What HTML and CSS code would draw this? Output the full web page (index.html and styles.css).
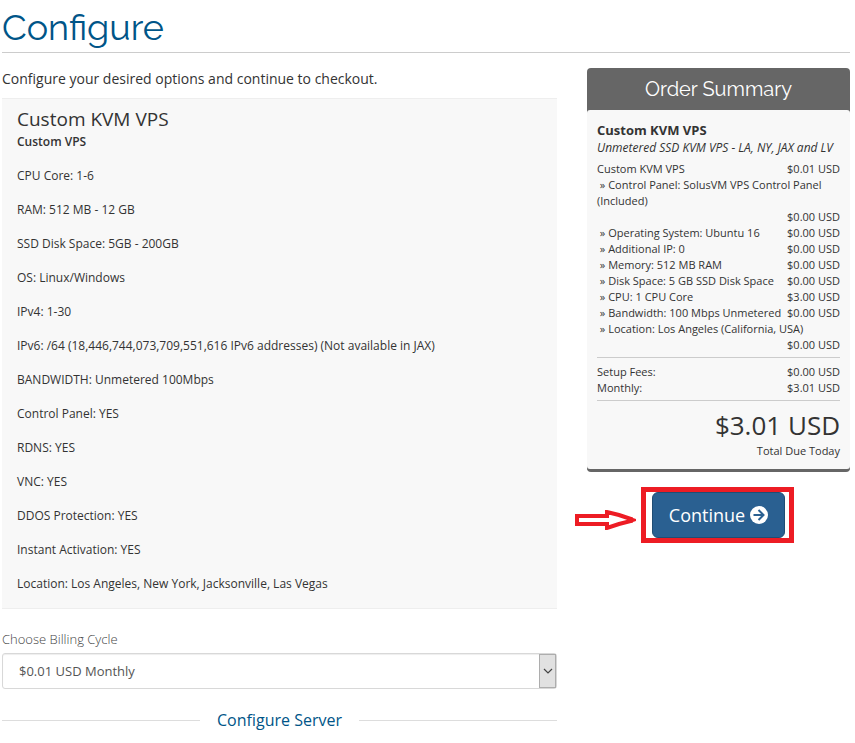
FILE: index.html
```html
<!DOCTYPE html>
<html lang="en">
<head>
<meta charset="utf-8">
<meta name="viewport" content="width=device-width, initial-scale=1">
<title>Configure</title>
<link rel="stylesheet" href="styles.css">
</head>
<body>
<div class="page">
  <h1 class="page-title">Configure</h1>
  <div class="columns">
    <main class="main">
      <p class="intro">Configure your desired options and continue to checkout.</p>
      <section class="product">
        <h2 class="product-name">Custom KVM VPS</h2>
        <p class="spec"><strong>Custom VPS</strong></p>
        <p class="spec">CPU Core: 1-6</p>
        <p class="spec">RAM: 512 MB - 12 GB</p>
        <p class="spec">SSD Disk Space: 5GB - 200GB</p>
        <p class="spec">OS: Linux/Windows</p>
        <p class="spec">IPv4: 1-30</p>
        <p class="spec">IPv6: /64 (18,446,744,073,709,551,616 IPv6 addresses) (Not available in JAX)</p>
        <p class="spec">BANDWIDTH: Unmetered 100Mbps</p>
        <p class="spec">Control Panel: YES</p>
        <p class="spec">RDNS: YES</p>
        <p class="spec">VNC: YES</p>
        <p class="spec">DDOS Protection: YES</p>
        <p class="spec">Instant Activation: YES</p>
        <p class="spec">Location: Los Angeles, New York, Jacksonville, Las Vegas</p>
      </section>
      <label class="field-label" for="cycle">Choose Billing Cycle</label>
      <div class="select-box">
        <select class="select" id="cycle">
          <option>$0.01 USD Monthly</option>
        </select>
        <span class="select-arrow" aria-hidden="true">
          <svg width="10" height="6" viewBox="0 0 10 6"><path d="M1 1l4 4 4-4" fill="none" stroke="#444" stroke-width="1.2"/></svg>
        </span>
      </div>
      <h2 class="sub-heading"><span>Configure Server</span></h2>
    </main>
    <aside class="side">
      <section class="summary">
        <h2 class="summary-title">Order Summary</h2>
        <div class="summary-body">
          <h3 class="item-name">Custom KVM VPS</h3>
          <p class="item-group">Unmetered SSD KVM VPS - LA, NY, JAX and LV</p>
          <div class="row"><span>Custom KVM VPS</span><span class="price">$0.01 USD</span></div>
          <div class="row"><span>&nbsp;» Control Panel: SolusVM VPS Control Panel (Included)</span><span class="price">$0.00 USD</span></div>
          <div class="row"><span>&nbsp;» Operating System: Ubuntu 16</span><span class="price">$0.00 USD</span></div>
          <div class="row"><span>&nbsp;» Additional IP: 0</span><span class="price">$0.00 USD</span></div>
          <div class="row"><span>&nbsp;» Memory: 512 MB RAM</span><span class="price">$0.00 USD</span></div>
          <div class="row"><span>&nbsp;» Disk Space: 5 GB SSD Disk Space</span><span class="price">$0.00 USD</span></div>
          <div class="row"><span>&nbsp;» CPU: 1 CPU Core</span><span class="price">$3.00 USD</span></div>
          <div class="row"><span>&nbsp;» Bandwidth: 100 Mbps Unmetered</span><span class="price">$0.00 USD</span></div>
          <div class="row"><span>&nbsp;» Location: Los Angeles (California, USA)</span><span class="price">$0.00 USD</span></div>
          <div class="fees">
            <div class="row"><span>Setup Fees:</span><span class="price">$0.00 USD</span></div>
            <div class="row"><span>Monthly:</span><span class="price">$3.01 USD</span></div>
          </div>
          <div class="total">$3.01 USD</div>
          <div class="total-label">Total Due Today</div>
        </div>
      </section>
      <div class="action">
        <div class="highlight">
          <svg class="pointer" width="62" height="20" viewBox="0 0 62 20" aria-hidden="true"><path d="M2 6H32V2L44 5L56 9V11L44 14L32 18V14H2Z" fill="#fff" stroke="#ed1c24" stroke-width="4"/><path d="M55 7L61 9V11L55 13Z" fill="#ed1c24"/></svg>
          <button class="continue" type="button">Continue
            <svg width="18" height="18" viewBox="0 0 18 18" aria-hidden="true"><circle cx="9" cy="9" r="9" fill="#fff"/><path d="M3.500 9H13M8.500 4L13.500 9L8.500 14" fill="none" stroke="#2a6091" stroke-width="2"/></svg>
          </button>
        </div>
      </div>
    </aside>
  </div>
</div>
</body>
</html>
```
FILE: styles.css
```css
* {
  box-sizing: border-box;
}

body {
  margin: 0;
  background: #fff;
  color: #333;
  font-family: "Open Sans", sans-serif;
  font-size: 14px;
}

h1, h2, h3, p {
  margin: 0;
  font-weight: 400;
}

.page {
  padding: 5px 5px 0 2px;
}

.page-title {
  border-bottom: 1px solid #ccc;
  padding-bottom: 3px;
  color: #058;
  font-family: Raleway, Lato, sans-serif;
  font-size: 36px;
  line-height: 44px;
}

.columns {
  display: grid;
  grid-template-columns: minmax(0, 1fr) 263px;
  gap: 30px;
  align-items: start;
  padding-top: 15px;
}

.intro {
  line-height: 20px;
  margin: 1px 0 9px;
}

.product {
  margin-bottom: 20px;
  padding: 8px 15px 16px;
  border-top: 1px solid #eee;
  border-bottom: 1px solid #eee;
  background: #f8f8f8;
}

.product-name {
  padding-bottom: 2px;
  font-size: 19px;
  line-height: 24px;
}

.spec {
  font-size: 12px;
  line-height: 17px;
}

.spec + .spec {
  margin-top: 17px;
}

.spec strong {
  font-weight: 600;
}

.field-label {
  display: block;
  margin-bottom: 4px;
  color: #444;
  font-size: 13px;
  font-weight: 300;
  line-height: 20px;
}

.select-box {
  position: relative;
}

.select {
  appearance: none;
  display: block;
  width: 100%;
  height: 36px;
  padding: 0 32px 0 16px;
  border: 1px solid #d8d8d8;
  border-radius: 3px;
  background: #fff;
  box-shadow: inset 0 1px 1px rgba(0, 0, 0, 0.07);
  color: #555;
  font-family: inherit;
  font-size: 13px;
}

.select-arrow {
  position: absolute;
  top: 1px;
  right: 1px;
  bottom: 1px;
  display: flex;
  align-items: center;
  justify-content: center;
  width: 17px;
  border: 1px solid #adadad;
  background: #e1e1e1;
  pointer-events: none;
}

.sub-heading {
  display: flex;
  align-items: center;
  gap: 17px;
  margin-top: 20px;
  color: #058;
  font-size: 16px;
  line-height: 22px;
}

.sub-heading::before,
.sub-heading::after {
  content: "";
  flex: 1;
  height: 1px;
  background: #ddd;
}

.summary {
  border-bottom: 3px solid #666;
  border-radius: 4px;
  background: #666;
}

.summary-title {
  color: #fff;
  font-family: Raleway, Lato, sans-serif;
  font-size: 20px;
  line-height: 42px;
  text-align: center;
}

.summary-body {
  padding: 11px 10px 10px;
  border-radius: 3px;
  background: #f8f8f8;
}

.item-name {
  font-size: 13px;
  font-weight: 700;
  line-height: 18px;
}

.item-group {
  margin-bottom: 5px;
  font-size: 12px;
  font-style: italic;
  line-height: 17px;
}

.row {
  display: flex;
  flex-wrap: wrap;
  font-size: 11px;
  line-height: 16px;
}

.price {
  margin-left: auto;
}

.fees {
  margin: 4px 0 8px;
  padding: 6px 0 4px;
  border-top: 1px solid #ccc;
  border-bottom: 1px solid #ccc;
}

.total {
  padding-bottom: 2px;
  font-size: 26px;
  line-height: 32px;
  text-align: right;
}

.total-label {
  font-size: 11px;
  line-height: 16px;
  text-align: right;
}

.action {
  display: flex;
  justify-content: center;
  padding: 15px 2px 0 0;
}

.highlight {
  position: relative;
  padding: 0 4px 0 6px;
  border: 5px solid #ed1c24;
}

.pointer {
  position: absolute;
  top: 18px;
  right: 100%;
  margin-right: 9px;
}

.continue {
  display: flex;
  align-items: center;
  gap: 5px;
  height: 46px;
  padding: 0 16px;
  border: 1px solid #204d74;
  border-radius: 6px;
  background: #2a6091;
  color: #fff;
  font-family: inherit;
  font-size: 18px;
}
```
